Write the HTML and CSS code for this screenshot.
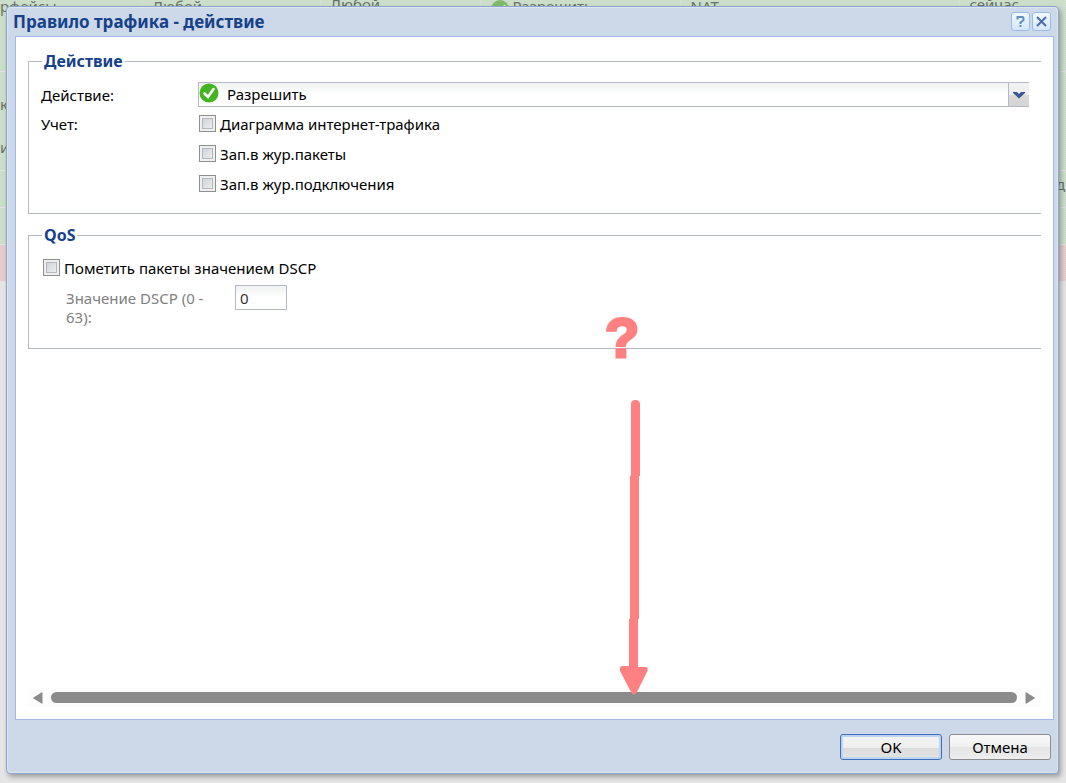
FILE: index.html
```html
<!DOCTYPE html>
<html lang="ru">
  <head>
    <meta charset="utf-8" />
    <meta name="viewport" content="width=device-width, initial-scale=1.0" />
    <title>Правило трафика - действие</title>
    <link rel="stylesheet" href="styles.css">
  </head>
  <body>
    <!-- rules list under the dialog -->
    <table class="rules">
      <colgroup>
        <col class="col-source"><col class="col-dest"><col class="col-service"><col class="col-action"><col class="col-nat"><col>
      </colgroup>
      <tr class="row-first">
        <td class="first">рфейсы</td>
        <td>Любой</td>
        <td class="raised">Любой</td>
        <td>
          <svg class="rule-icon" viewBox="0 0 20 20"><circle cx="10" cy="10" r="10" fill="#7fba6a"/><path d="M5 10l4 4 7-8" fill="none" stroke="#dcebd6" stroke-width="3"/></svg>
          Разрешить
        </td>
        <td>NAT</td>
        <td class="raised">сейчас</td>
      </tr>
      <tr class="row-tall">
        <td class="first">к<br>и</td><td></td><td></td><td></td><td></td><td></td>
      </tr>
      <tr><td></td><td></td><td></td><td></td><td></td><td class="last">д</td></tr>
      <tr><td></td><td></td><td></td><td></td><td></td><td></td></tr>
      <tr class="deny"><td></td><td></td><td></td><td></td><td></td><td></td></tr>
    </table>

    <form class="window" role="dialog" aria-labelledby="window-title">
      <header class="window-header">
        <h1 class="window-title" id="window-title">Правило трафика - действие</h1>
        <button type="button" class="tool" aria-label="Справка">
          <svg viewBox="0 0 19 19" width="19" height="19"><path d="M6.500 7.500V5h4.500q1.500 0 1.500 1.500V8L9.500 10.500V12" fill="none" stroke="#5c8fc0" stroke-width="2"/><path d="M8.500 13h2v2h-2z" fill="#5c8fc0"/></svg>
        </button>
        <button type="button" class="tool" aria-label="Закрыть">
          <svg viewBox="0 0 19 19" width="19" height="19"><path d="M5 5l9 9M14 5l-9 9" fill="none" stroke="#4a6da8" stroke-width="2"/></svg>
        </button>
      </header>

      <div class="window-body">
        <fieldset class="group">
          <legend>Действие</legend>
          <div class="field">
            <label class="field-label" for="action">Действие:</label>
            <div class="combo">
              <select id="action">
                <option>Разрешить</option>
              </select>
              <svg class="combo-icon" viewBox="0 0 20 20" width="20" height="20"><circle cx="10" cy="10" r="9.500" fill="#43b51f"/><path d="M5.500 10.500l3.500 3.500 5.500-8" fill="none" stroke="#fff" stroke-width="2.600" stroke-linecap="round"/></svg>
              <span class="combo-arrow">
                <svg viewBox="0 0 12 8" width="12" height="8"><path d="M0 1h4l2 2 2-2h4v1L6 7.500 0 2z" fill="#3a5795"/></svg>
              </span>
            </div>
          </div>
          <div class="field field-checks">
            <span class="field-label">Учет:</span>
            <div class="checks">
              <label class="check"><input type="checkbox">Диаграмма интернет-трафика</label>
              <label class="check"><input type="checkbox">Зап.в жур.пакеты</label>
              <label class="check"><input type="checkbox">Зап.в жур.подключения</label>
            </div>
          </div>
        </fieldset>

        <fieldset class="group group-qos">
          <legend>QoS</legend>
          <label class="check"><input type="checkbox">Пометить пакеты значением DSCP</label>
          <div class="field dscp">
            <label class="dscp-label" for="dscp">Значение DSCP (0 - 63):</label>
            <input class="dscp-value" id="dscp" type="text" value="0">
          </div>
        </fieldset>

        <div class="scroller">
          <svg viewBox="0 0 10 12" width="10" height="12"><path d="M8.500 .5Q9.500 0 9.500 1v10q0 1-1 .5L.5 6.500Q0 6 .5 5.500z" fill="#8b8b8b"/></svg>
          <div class="thumb"></div>
          <svg viewBox="0 0 10 12" width="10" height="12"><path d="M1.500 .5Q.5 0 .5 1v10q0 1 1 .5L9.500 6.500Q10 6 9.500 5.500z" fill="#8b8b8b"/></svg>
        </div>
      </div>

      <footer class="window-footer">
        <button type="submit" class="btn btn-default">OK</button>
        <button type="button" class="btn">Отмена</button>
      </footer>
    </form>

    <!-- hand-drawn note -->
    <span class="note-mark">?</span>
    <svg class="note-arrow" viewBox="0 0 28 296" width="28" height="296">
      <path d="M11 76V4q0-4 4.500-4T20 4V76H19V219H18V267H26q3 1 1 5L17 292q-3 5-6 0L0 271q-1-4 2-5H9V219H10V76z" fill="#ff8080"/>
    </svg>
  </body>
</html>
```
FILE: styles.css
```css
html, body {
  height: 100%;
  margin: 0;
}
body {
  position: relative;
  overflow: hidden;
  background: #e5e5e5;
  font-family: "Noto Sans", Tahoma, sans-serif;
  font-size: 15px;
  line-height: 19px;
  color: #000;
}
button, input, select {
  font: inherit;
  color: inherit;
}
svg {
  display: block;
}

/* rules list */
.rules {
  width: 100%;
  table-layout: fixed;
  border-collapse: collapse;
  color: #687268;
}
.rules td {
  box-sizing: border-box;
  height: 37px;
  padding: 0 0 0 10px;
  vertical-align: top;
  white-space: nowrap;
  background: #ccdeca;
  border-bottom: 1px solid #e5e0e5;
  border-right: 1px dotted #dcdcdc;
}
.rules td.first {
  padding-left: 0;
}
.rules .row-first td {
  height: 71px;
  line-height: 13px;
}
.rules .row-first td.raised {
  line-height: 8px;
}
.rules .row-tall td {
  height: 99px;
  padding-top: 11px;
  line-height: 43px;
}
.rules .deny td {
  background: #e5cccc;
}
.rules td.last {
  padding-top: 4px;
  padding-right: 0;
  text-align: right;
}
.col-source { width: 142px; }
.col-dest { width: 178px; }
.col-service { width: 160px; }
.col-action { width: 200px; }
.col-nat { width: 279px; }
.rule-icon {
  float: left;
  width: 18px;
  height: 18px;
  margin-right: 4px;
}

/* dialog */
.window {
  position: absolute;
  inset: 6px 7px 9px 6px;
  box-sizing: border-box;
  display: flex;
  flex-direction: column;
  background: #cdd8e8;
  border: 1px solid #8aa4cb;
  border-radius: 4px;
  box-shadow: inset 0 0 0 1px #dfe5f0, 2px 3px 5px rgba(0, 0, 0, .3);
}
.window-header {
  display: flex;
  align-items: center;
  gap: 2px;
  height: 29px;
  padding: 0 7px 0 6px;
}
.window-title {
  flex: 1;
  margin: 0;
  font-size: 17px;
  color: #15428b;
}
.tool {
  box-sizing: border-box;
  width: 19px;
  height: 19px;
  padding: 0;
  overflow: hidden;
  background: linear-gradient(#f4f9ff, #d5e7fc);
  border: 1px solid #99bbe8;
  border-radius: 3px;
}
.tool svg {
  margin: -1px;
}
.window-body {
  flex: 1;
  display: flex;
  flex-direction: column;
  margin: 0 4px 0 8px;
  padding: 15px 12px 12px;
  background: #fff;
  border: 1px solid #a3bae9;
}
.window-footer {
  display: flex;
  justify-content: flex-end;
  gap: 7px;
  padding: 14px 7px 13px;
}
.btn {
  box-sizing: border-box;
  width: 102px;
  height: 26px;
  padding: 0;
  background: linear-gradient(#f8f8f8, #f0f0f0 50%, #e4e4e4 50%, #eee);
  border: 1px solid #8c8c8c;
  border-radius: 3px;
}
.btn-default {
  background: linear-gradient(#f4f4f4, #eee 55%, #dcdcdc 55%, #e4e4e4);
  border-color: #3f6fb5;
  box-shadow: inset 0 0 0 2px #bcd4f5;
}

/* form */
.group {
  margin: 0 0 12px;
  padding: 11px 12px 19px;
  border: 1px solid #b5b8c8;
  border-right: 0;
}
.group legend {
  margin-left: 1px;
  padding: 0 2px;
  font-size: 16px;
  font-weight: bold;
  color: #15428b;
}
.group-qos {
  padding: 14px 14px 21px;
}
.group-qos legend {
  margin-left: -1px;
}
.field {
  display: flex;
}
.field-checks {
  padding-top: 4px;
}
.field-label {
  width: 157px;
  padding-top: 4px;
}
.combo {
  position: relative;
  flex: 1;
}
.combo select {
  display: block;
  box-sizing: border-box;
  width: 100%;
  height: 25px;
  padding: 0 24px 0 28px;
  appearance: none;
  background: linear-gradient(#eff2f1, #fff 12px);
  border: 1px solid #b5b8c8;
  border-radius: 0;
}
.combo-icon {
  position: absolute;
  top: 1px;
  left: 1px;
  pointer-events: none;
}
.combo-arrow {
  position: absolute;
  inset: 1px 0 1px auto;
  display: flex;
  align-items: center;
  justify-content: center;
  width: 20px;
  background: linear-gradient(#f3f3f3, #ececec 50%, #dadada 50%, #d4d4d4);
  border-left: 1px solid #b5b8c8;
  pointer-events: none;
}
.checks {
  display: flex;
  flex-direction: column;
  gap: 11px;
  padding: 4px 1px 0;
}
.check {
  display: flex;
  gap: 4px;
}
.check input {
  box-sizing: border-box;
  width: 17px;
  height: 17px;
  margin: 0;
  appearance: none;
  background: linear-gradient(135deg, #c8ccd2, #f4f4f4);
  border: 1px solid #8e8f8f;
  box-shadow: inset 0 0 0 2px #f0f0f0, inset 0 0 0 3px #b4b8be;
}
.dscp {
  gap: 10px;
  padding: 7px 0 0 23px;
  color: #808080;
}
.dscp-label {
  width: 159px;
  padding-top: 4px;
}
.dscp-value {
  box-sizing: border-box;
  width: 52px;
  height: 25px;
  padding: 0 4px;
  color: #333;
  background: linear-gradient(#eff2f1, #fff 12px);
  border: 1px solid #b5b8c8;
}

/* horizontal scrollbar */
.scroller {
  display: flex;
  align-items: center;
  gap: 8px;
  height: 19px;
  margin-top: auto;
  padding: 0 6px 0 5px;
  background: #fcfcfc;
}
.thumb {
  flex: 1;
  height: 11px;
  background: #8b8b8b;
  border-radius: 6px;
}

/* note over the dialog */
.note-mark {
  position: absolute;
  top: 308px;
  left: 605px;
  font: bold 56px/60px "Liberation Sans", Arial, sans-serif;
  color: #ff8080;
  -webkit-text-stroke: 3px #ff8080;
}
.note-arrow {
  position: absolute;
  top: 400px;
  left: 620px;
}
```
